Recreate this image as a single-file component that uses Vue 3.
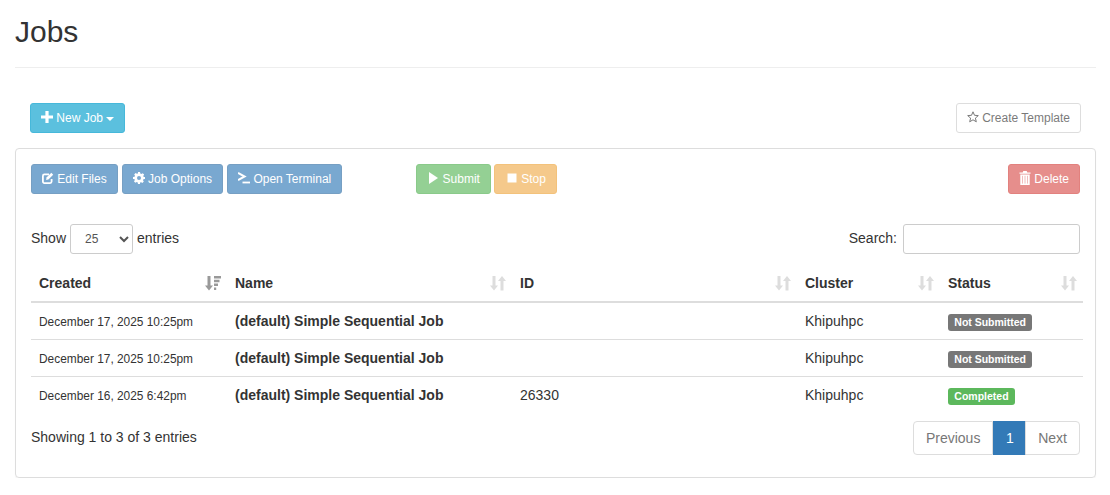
<script setup>
const rows = [
  { created: 'December 17, 2025 10:25pm', name: '(default) Simple Sequential Job', id: '', cluster: 'Khipuhpc', status: 'Not Submitted', cls: 'muted' },
  { created: 'December 17, 2025 10:25pm', name: '(default) Simple Sequential Job', id: '', cluster: 'Khipuhpc', status: 'Not Submitted', cls: 'muted' },
  { created: 'December 16, 2025 6:42pm', name: '(default) Simple Sequential Job', id: '26330', cluster: 'Khipuhpc', status: 'Completed', cls: 'done' },
];
const cols = ['Name', 'ID', 'Cluster', 'Status'];
</script>

<template>
  <div class="page">
    <h1 class="title">Jobs</h1>

    <div class="top-actions">
      <button class="btn info">
        <svg class="ico" viewBox="0 0 12 12"><path d="M4.4 0h3.2v4.4H12v3.2H7.6V12H4.4V7.6H0V4.4h4.4z" fill="currentColor"/></svg>
        New Job
        <span class="caret"></span>
      </button>
      <button class="btn outline">
        <svg class="ico" viewBox="0 0 12 12"><path d="M6 .8l1.500 3.500 3.800.3-2.900 2.500.9 3.700L6 8.800l-3.300 2 .9-3.700L.7 4.600l3.800-.3z" fill="none" stroke="currentColor"/></svg>
        Create Template
      </button>
    </div>

    <div class="panel">
      <div class="toolbar">
        <div class="group">
          <button class="btn primary">
            <svg class="ico" viewBox="0 0 12 12"><path d="M9.600 7v2.600a1.500 1.500 0 0 1-1.500 1.500H2.400a1.500 1.500 0 0 1-1.500-1.500V3.900a1.500 1.500 0 0 1 1.500-1.500H7" fill="none" stroke="currentColor" stroke-width="1.800"/><path d="M4.500 5.600L9.300.8 11.200 2.700 6.400 7.500l-2.300.4z" fill="currentColor"/></svg>
            Edit Files
          </button>
          <button class="btn primary">
            <svg class="ico" viewBox="0 0 12 12"><path fill-rule="evenodd" d="M5 0h2l.3 1.600 1 .4L9.700 1.200l1.400 1.400-.8 1.300.4 1L12 5v2l-1.600.3-.4 1 .8 1.300-1.400 1.400-1.300-.8-1 .4L7 12H5l-.3-1.600-1-.4-1.300.8-1.400-1.400.8-1.300-.4-1L0 7V5l1.600-.3.4-1-.8-1.300 1.400-1.400 1.300.8 1-.4zM6 4a2 2 0 1 0 0 4 2 2 0 0 0 0-4z" fill="currentColor"/></svg>
            Job Options
          </button>
          <button class="btn primary">
            <svg class="ico" viewBox="0 0 12 12"><path d="M0 .9L6.600 4.500 0 8.100" fill="none" stroke="currentColor" stroke-width="2"/><path d="M4.500 9.600H12v1.800H4.500z" fill="currentColor"/></svg>
            Open Terminal
          </button>
        </div>
        <div class="group run">
          <button class="btn success">
            <svg class="ico" viewBox="0 0 12 12"><path d="M2 0L11 6l-9 6z" fill="currentColor"/></svg>
            Submit
          </button>
          <button class="btn warning">
            <svg class="ico wide" viewBox="0 0 13 12"><path d="M2.500 1.500h9v9h-9z" fill="currentColor"/></svg>
            Stop
          </button>
        </div>
        <button class="btn danger">
          <svg class="ico tall" viewBox="0 0 12 14"><path d="M4.300 0h3.400l.6 1.500H11.500v1.300H.5V1.500h3.200zM1.300 3.500h9.400V14H1.300z" fill="currentColor"/><path d="M3.500 4.800v7.800M6 4.800v7.800M8.500 4.800v7.800" stroke="#e88f8d" stroke-width=".9"/></svg>
          Delete
        </button>
      </div>

      <div class="filters">
        <label class="length">
          Show
          <select class="select">
            <option>25</option>
          </select>
          entries
        </label>
        <label class="search">
          Search:
          <input class="input" type="text" />
        </label>
      </div>

      <table class="jobs">
        <colgroup>
          <col style="width: 196px" />
          <col style="width: 285px" />
          <col style="width: 285px" />
          <col style="width: 143px" />
          <col style="width: 143px" />
        </colgroup>
        <thead>
          <tr>
            <th>
              <div class="th">
                Created
                <svg class="sort active" viewBox="0 0 16 16"><path d="M2.500 1h3v9.500H8L4 15.500 0 10.500h2.500z" fill="currentColor"/><path d="M9 1h7v2.500H9zM9 4.800h5.500v2.500H9zM9 8.600h4v2.500H9zM9 12.400h2.200v2.500H9z" fill="currentColor"/></svg>
              </div>
            </th>
            <th v-for="c in cols" :key="c">
              <div class="th">
                {{ c }}
                <svg class="sort" viewBox="0 0 16 16"><path d="M2.500 1h3v9.500H8L4 15.500 0 10.500h2.500z" fill="currentColor"/><path d="M12 1l4 5h-2.500v9.500h-3V6H8z" fill="currentColor"/></svg>
              </div>
            </th>
          </tr>
        </thead>
        <tbody>
          <tr v-for="(r, i) in rows" :key="i">
            <td class="date">{{ r.created }}</td>
            <td class="name">{{ r.name }}</td>
            <td>{{ r.id }}</td>
            <td>{{ r.cluster }}</td>
            <td><span class="label" :class="r.cls">{{ r.status }}</span></td>
          </tr>
        </tbody>
      </table>

      <div class="foot">
        <div>Showing 1 to 3 of 3 entries</div>
        <div class="pager">
          <a class="prev">Previous</a>
          <a class="cur">1</a>
          <a class="next">Next</a>
        </div>
      </div>
    </div>
  </div>
</template>

<style>
body {
  background: #fff;
}
</style>

<style scoped>
.page {
  padding: 0 14px 0 15px;
  font-family: "Liberation Sans", Arial, sans-serif;
  font-size: 14px;
  line-height: 20px;
  color: #333;
}
.title {
  margin: 0;
  padding: 15px 0 19px;
  border-bottom: 1px solid #eee;
  font-size: 30px;
  font-weight: 500;
  line-height: 33px;
}
.top-actions {
  display: flex;
  justify-content: space-between;
  margin: 35px 15px 15px;
}
.btn {
  display: inline-block;
  height: 30px;
  padding: 5px 10px;
  border: 1px solid transparent;
  border-radius: 3px;
  font-family: inherit;
  font-size: 12px;
  line-height: 18px;
  color: #fff;
  white-space: nowrap;
}
.ico {
  width: 12px;
  height: 12px;
  vertical-align: -1px;
}
.ico.wide {
  width: 13px;
}
.ico.tall {
  height: 14px;
  vertical-align: -2px;
}
.info {
  background: #5bc0de;
  border-color: #46b8da;
}
.outline {
  background: #fff;
  border-color: #ccc;
  color: #333;
  opacity: 0.65;
}
.primary {
  background: #337ab7;
  border-color: #2e6da4;
  opacity: 0.65;
}
.success {
  background: #5cb85c;
  border-color: #4cae4c;
  opacity: 0.65;
}
.warning {
  background: #f0ad4e;
  border-color: #eea236;
  opacity: 0.65;
}
.danger {
  background: #d9534f;
  border-color: #d43f3a;
  opacity: 0.65;
}
.caret {
  display: inline-block;
  width: 0;
  height: 0;
  vertical-align: middle;
  border-top: 4px solid;
  border-right: 4px solid transparent;
  border-left: 4px solid transparent;
}
.panel {
  padding: 15px 15px 22px;
  border: 1px solid #ddd;
  border-radius: 4px;
  box-shadow: 0 1px 1px rgba(0, 0, 0, 0.05);
}
.toolbar {
  display: flex;
  align-items: center;
}
.group {
  display: flex;
  gap: 4px;
}
.run {
  gap: 3px;
  margin-left: 74px;
}
.danger {
  margin-left: auto;
}
.filters {
  display: flex;
  justify-content: space-between;
  margin-top: 30px;
}
.length,
.search {
  display: flex;
  align-items: flex-start;
  gap: 4px;
  line-height: 28px;
}
.select {
  width: 63px;
  height: 30px;
  padding: 5px 10px;
  border: 1px solid #ccc;
  border-radius: 3px;
  background: #fff;
  color: #555;
  font-family: inherit;
  font-size: 12px;
}
.search {
  gap: 6px;
}
.input {
  width: 177px;
  height: 30px;
  box-sizing: border-box;
  padding: 5px 10px;
  border: 1px solid #ccc;
  border-radius: 3px;
  background: #fff;
}
.jobs {
  width: 1052px;
  margin-top: 11px;
  border-collapse: collapse;
  table-layout: fixed;
}
.jobs th {
  padding: 8px;
  border-bottom: 2px solid #ddd;
  text-align: left;
}
.th {
  display: flex;
  align-items: center;
  justify-content: space-between;
}
.sort {
  width: 16px;
  height: 16px;
  margin-right: -2px;
  color: #ddd;
}
.sort.active {
  color: #999;
}
.jobs td {
  padding: 8px;
  height: 36px;
  box-sizing: border-box;
  border-bottom: 1px solid #ddd;
}
.jobs tbody tr:last-child td {
  border-bottom: 0;
}
.jobs td.date {
  padding: 9px 8px 7px;
  font-size: 11.9px;
}
.jobs td.name {
  font-weight: 700;
}
.label {
  display: inline-block;
  padding: 2px 6.3px 3px;
  border-radius: 3px;
  font-size: 10.5px;
  font-weight: 700;
  line-height: 12px;
  color: #fff;
  vertical-align: middle;
}
.muted {
  background: #777;
}
.done {
  background: #5cb85c;
}
.foot {
  display: flex;
  align-items: flex-start;
  justify-content: space-between;
  margin-top: 8px;
}
.foot > div:first-child {
  padding-top: 6px;
}
.pager {
  display: flex;
  height: 34px;
  color: #777;
}
.pager a {
  padding: 6px 12px;
  border: 1px solid #ddd;
  background: #fff;
}
.pager .prev {
  border-radius: 4px 0 0 4px;
}
.pager .cur {
  margin-left: -0.5px;
  background: #337ab7;
  border-color: #337ab7;
  color: #fff;
}
.pager .next {
  margin-left: -1.5px;
  border-radius: 0 4px 4px 0;
}
</style>
